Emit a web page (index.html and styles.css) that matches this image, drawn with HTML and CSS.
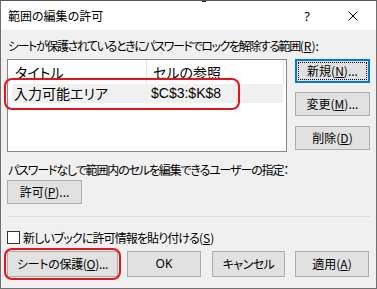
FILE: index.html
```html
<!DOCTYPE html>
<html lang="ja">
<head>
<meta charset="utf-8">
<title>範囲の編集の許可</title>
<link rel="stylesheet" href="styles.css">
</head>
<body>
<div class="dialog">
  <div class="titlebar">
    <span class="title">範囲の編集の許可</span>
    <span class="tb-btn help">?</span>
    <span class="tb-btn close">
      <svg width="10" height="10" viewBox="0 0 10 10"><path d="M0.5 0.5L9.5 9.5M9.5 0.5L0.5 9.5" stroke="#000" stroke-width="1" fill="none"/></svg>
    </span>
  </div>
  <div class="content">
    <div class="label label1"><span class="jp">シートが保護されているときにパスワードでロックを解除する範囲</span>(<u>R</u>):</div>
    <div class="listarea">
      <div class="listview">
        <div class="lv-header">
          <div class="col c1">タイトル</div>
          <div class="divider"></div>
          <div class="col c2">セルの参照</div>
          <div class="divider"></div>
        </div>
        <div class="lv-row">
          <div class="col c1 r1">入力可能エリア</div>
          <div class="col c2 r2">$C$3:$K$8</div>
        </div>
      </div>
      <div class="side-buttons">
        <button class="btn side focused">新規(<u>N</u>)...</button>
        <button class="btn side second">変更(<u>M</u>)...</button>
        <button class="btn side third">削除(<u>D</u>)</button>
      </div>
    </div>
    <div class="label label2">パスワードなしで範囲内のセルを編集できるユーザーの指定：</div>
    <button class="btn permit">許可(<u>P</u>)...</button>
    <div class="sep"></div>
    <div class="check-row"><span class="checkbox"></span><span class="check-label"><span class="jp">新しいブックに許可情報を貼り付ける</span>(<u>S</u>)</span></div>
    <div class="bottom-buttons">
      <button class="btn bb protect">シートの保護(<u>O</u>)...</button>
      <button class="btn bb ok">OK</button>
      <button class="btn bb cancel">キャンセル</button>
      <button class="btn bb apply">適用(<u>A</u>)</button>
    </div>
  </div>
  <div class="highlight hl-row"></div>
  <div class="highlight hl-protect"></div>
  <div class="top-mark"></div>
</div>
</body>
</html>
```
FILE: styles.css
```css
html, body {
  margin: 0;
  padding: 0;
  background: #f0f0f0;
}
body {
  font-family: "Noto Sans CJK JP", "Noto Sans", sans-serif;
  font-feature-settings: "palt";
  font-size: 12px;
  color: #000;
}
.dialog {
  position: relative;
  width: 377px;
  height: 289px;
  box-sizing: border-box;
  border: 1px solid #6f6f6f;
  border-top-color: #555;
  background: #f0f0f0;
  overflow: hidden;
}
.titlebar {
  display: flex;
  align-items: center;
  height: 29px;
  background: #fff;
}
.title {
  flex: 1;
  padding-left: 7px;
  line-height: 29px;
}
.tb-btn {
  width: 46px;
  height: 29px;
  display: flex;
  align-items: center;
  justify-content: center;
}
.help {
  font-family: "Noto Sans", sans-serif;
  font-size: 13px;
}
.close svg {
  display: block;
}
.content {
  padding: 8px 0 0 6px;
}
.label {
  line-height: 16px;
  height: 16px;
  padding-left: 1px;
  white-space: nowrap;
}
.label1 .jp {
  letter-spacing: -1.4px;
}
.label2 {
  margin-top: 10px;
  letter-spacing: -1.15px;
}
.listarea {
  display: flex;
  margin-top: 5px;
}
.listview {
  width: 280px;
  height: 93px;
  box-sizing: border-box;
  border: 1px solid #828790;
  background: #fff;
  font-size: 14px;
}
.lv-header {
  display: flex;
  height: 24px;
  line-height: 24px;
}
.lv-header .divider {
  width: 1px;
  background: #e5e5e5;
}
.col {
  box-sizing: border-box;
  padding-left: 7px;
  white-space: nowrap;
}
.c1 { width: 138px; }
.c2 { width: 136px; padding-left: 6px; }
.lv-row {
  display: flex;
  height: 19px;
  line-height: 19px;
  margin-left: 4px;
  width: 271px;
  background: #f0f0f0;
}
.lv-row .c1 { width: 134px; padding-left: 2px; }
.lv-row .c2 { width: 137px; padding-left: 5px; font-family: "Liberation Sans", sans-serif; }
.side-buttons {
  display: flex;
  flex-direction: column;
  margin-left: 8px;
}
.btn {
  box-sizing: border-box;
  background: #e1e1e1;
  border: 1px solid #adadad;
  font-family: inherit;
  font-feature-settings: "palt";
  font-size: 12px;
  color: #000;
  padding: 0;
  margin: 0;
  line-height: 1;
}
.side {
  width: 75px;
  height: 24px;
}
.side.second { margin-top: 9px; }
.side.third { margin-top: 10px; }
.focused {
  border: 2px solid #0078d7;
  outline: 1px dotted #000;
  outline-offset: -4px;
}
.permit {
  display: block;
  width: 75px;
  height: 24px;
  margin-top: 2px;
}
.sep {
  margin-top: 12px;
  margin-left: 1px;
  width: 362px;
  height: 1px;
  background: #dcdcdc;
}
.check-row {
  display: flex;
  align-items: center;
  height: 15px;
  margin-top: 13px;
  line-height: 15px;
}
.checkbox {
  width: 13px;
  height: 13px;
  box-sizing: border-box;
  border: 1px solid #333;
  background: #fff;
}
.check-label {
  margin-left: 3px;
}
.check-label .jp {
  letter-spacing: -0.9px;
}
.bottom-buttons {
  display: flex;
  margin-top: 6px;
}
.bb {
  height: 26px;
}
.protect { width: 111px; letter-spacing: -0.3px; }
.ok { width: 74px; margin-left: 9px; font-family: "Noto Sans", sans-serif; }
.cancel { width: 73px; margin-left: 11px; letter-spacing: -0.5px; }
.apply { width: 74px; margin-left: 10px; }
.highlight {
  position: absolute;
  box-sizing: border-box;
  border: 2px solid #e4141b;
  border-radius: 8px;
}
.hl-row {
  left: 3px;
  top: 77px;
  width: 236px;
  height: 32px;
}
.hl-protect {
  left: 3px;
  top: 247px;
  width: 117px;
  height: 32px;
}
.top-mark {
  position: absolute;
  left: 201px;
  top: -1px;
  width: 4px;
  height: 2px;
  background: #222;
}
```
